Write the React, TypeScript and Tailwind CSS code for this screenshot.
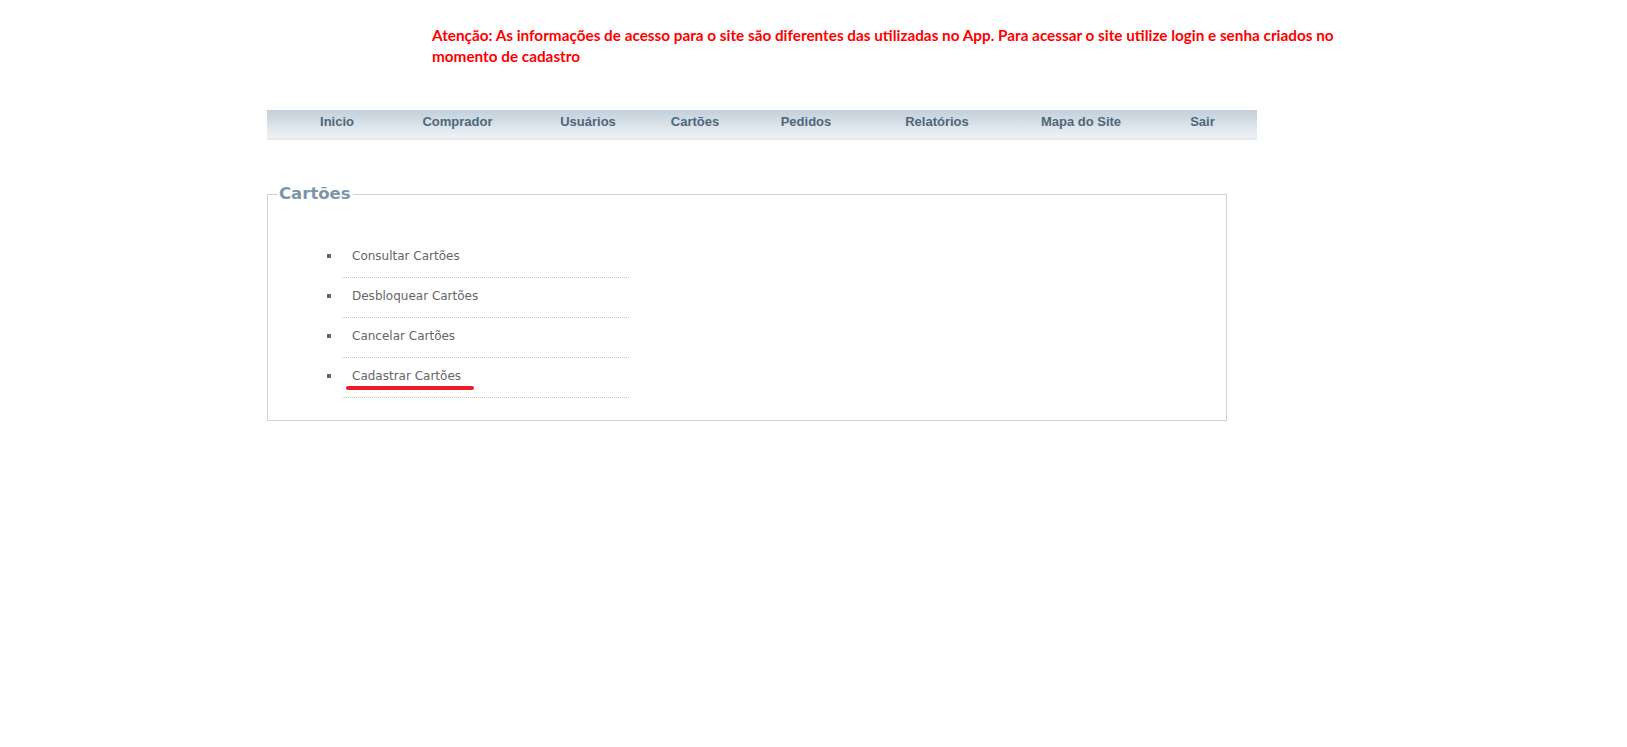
import React from "react";

const navItems: { label: string; w: string }[] = [
  { label: "Inicio", w: "w-[120px]" },
  { label: "Comprador", w: "w-[121px]" },
  { label: "Usuários", w: "w-[140px]" },
  { label: "Cartões", w: "w-[74px]" },
  { label: "Pedidos", w: "w-[148px]" },
  { label: "Relatórios", w: "w-[114px]" },
  { label: "Mapa do Site", w: "w-[174px]" },
  { label: "Sair", w: "w-[69px]" },
];

const items = [
  "Consultar Cartões",
  "Desbloquear Cartões",
  "Cancelar Cartões",
  "Cadastrar Cartões",
];

export default function App() {
  return (
    <div className="min-h-screen w-full bg-white">
      <div className="pt-[25px] pl-[432px]">
        <p className="w-[930px] font-['Lato','Liberation_Sans',sans-serif] text-[15.3px] font-bold leading-[21px] text-[#ff0000]">
          Atenção: As informações de acesso para o site são diferentes das utilizadas no App. Para acessar o site utilize login e senha criados no momento de cadastro
        </p>
      </div>

      <nav className="ml-[267px] mt-[43px] flex h-[30px] w-[990px] border-b-[2px] border-[#e3e9ee] bg-gradient-to-b from-[#c2cfda] to-[#f0f3f6] pl-[10px] pt-[4px]">
        {navItems.map((n) => (
          <a
            key={n.label}
            href="#"
            className={`${n.w} text-center font-['Liberation_Sans',Arial,sans-serif] text-[13px] font-bold leading-[16px] text-[#4d687c]`}
          >
            {n.label}
          </a>
        ))}
      </nav>

      <fieldset className="ml-[267px] mt-[44px] w-[960px] border border-[#c5d4de] pb-[22px]">
        <legend className="ml-[9px] px-[2px] font-['DejaVu_Sans',Verdana,sans-serif] text-[16.5px] font-bold leading-[20px] text-[#7b95a9]">
          Cartões
        </legend>
        <ul className="ml-[59px] pt-[34px]">
          {items.map((it, i) => (
            <li key={it} className="flex items-start">
              <span className="mt-[16px] h-[4px] w-[4px] shrink-0 bg-[#666666]" />
              <div className="relative ml-[11px] h-[40px] w-[287px] border-b border-dotted border-[#c4c4c4] pl-[10px] pt-[10px] font-['DejaVu_Sans',Verdana,sans-serif] text-[12px] leading-[16px]">
                <a href="#" className="text-[#666666]">
                  {it}
                </a>
                {i === 3 && (
                  <span className="absolute left-[4px] top-[28px] h-[4px] w-[128px] rounded-full bg-[#ee1c25]" />
                )}
              </div>
            </li>
          ))}
        </ul>
      </fieldset>
    </div>
  );
}
